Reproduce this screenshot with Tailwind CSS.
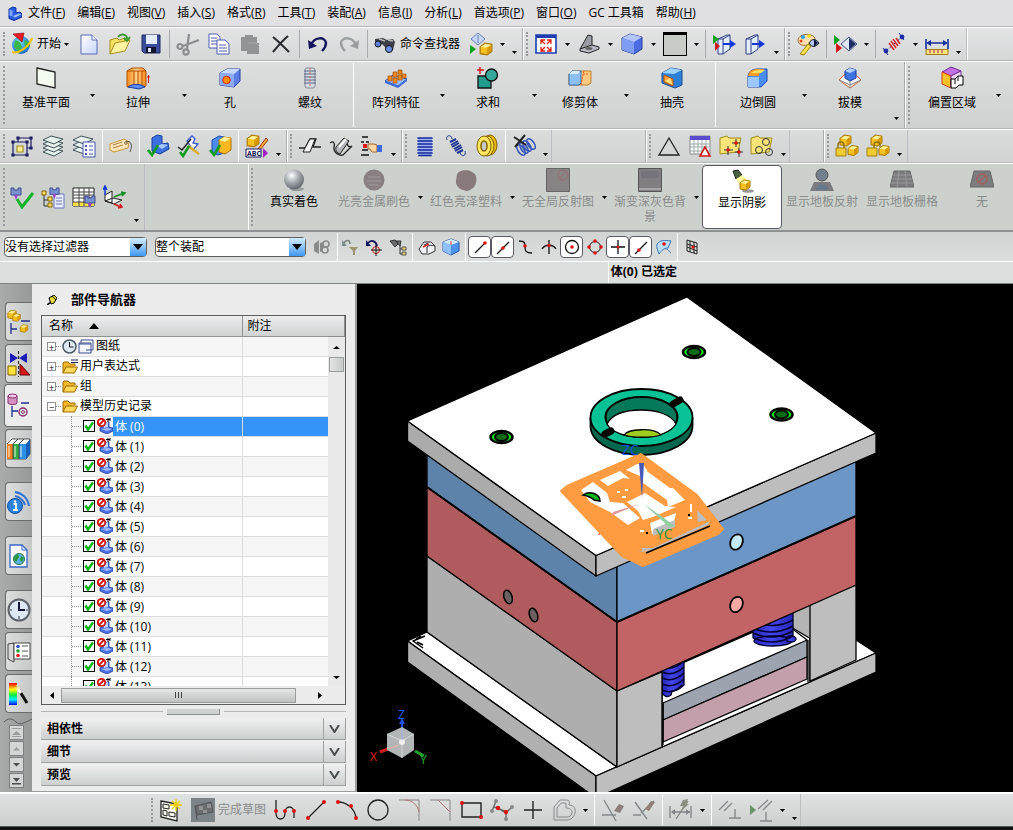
<!DOCTYPE html>
<html lang="zh-CN">
<head>
<meta charset="utf-8">
<meta name="viewport" content="width=device-width, initial-scale=1">
<title>NX 模具装配</title>
<script src="https://cdn.jsdelivr.net/npm/@tailwindcss/browser@4"></script>
</head>
<body class="flex h-screen flex-col overflow-hidden bg-[#d8dad9] font-['Open_Sans','Noto_Sans_CJK_SC',sans-serif] text-xs text-black">

<!-- Shared symbols -->
<svg class="absolute size-0" aria-hidden="true">
  <defs>
    <linearGradient id="blueG" x1="0" y1="0" x2="1" y2="1"><stop offset="0" stop-color="#b9ccff"/><stop offset="1" stop-color="#3a5fd8"/></linearGradient>
    <linearGradient id="pageG" x1="0" y1="0" x2="1" y2="1"><stop offset="0" stop-color="#fff"/><stop offset="1" stop-color="#c8d4ff"/></linearGradient>
    <linearGradient id="orangeG" x1="0" y1="0" x2="1" y2="0"><stop offset="0" stop-color="#ff8a1c"/><stop offset=".5" stop-color="#ffd08a"/><stop offset="1" stop-color="#ff8a1c"/></linearGradient>
    <linearGradient id="rainG" x1="0" y1="0" x2="0" y2="1"><stop offset="0" stop-color="#f00"/><stop offset=".3" stop-color="#ff0"/><stop offset=".55" stop-color="#0e4"/><stop offset=".75" stop-color="#0ef"/><stop offset="1" stop-color="#00f"/></linearGradient>
    <linearGradient id="springG" x1="0" y1="0" x2="1" y2="0"><stop offset="0" stop-color="#2424b4"/><stop offset=".45" stop-color="#4446f0"/><stop offset="1" stop-color="#2828b4"/></linearGradient>
    <radialGradient id="ballG" cx=".38" cy=".3" r=".75"><stop offset="0" stop-color="#fff"/><stop offset=".45" stop-color="#aab0b4"/><stop offset="1" stop-color="#5a6064"/></radialGradient>
    <radialGradient id="globeG" cx=".4" cy=".35" r=".7"><stop offset="0" stop-color="#7fe0ff"/><stop offset="1" stop-color="#1060c8"/></radialGradient>
  </defs>
  <symbol id="dn" viewBox="0 0 5 3"><path d="M0 0h5L2.500 3z"/></symbol>
  <symbol id="cube" viewBox="0 0 24 24"><path d="M2 6l8-4 12 3v12l-8 5-12-4z" fill="#4a6ce0" stroke="#2c3c9c"/><path d="M2 6l8-4 12 3-8 5z" fill="#b4c6ff"/><path d="M2 6l12 4v12L2 18z" fill="#7f9df5"/></symbol>
  <symbol id="goldbox" viewBox="0 0 12 12"><path d="M1 4l4-3 6 1v6l-4 3-6-1z" fill="#f5c020" stroke="#a87800"/><path d="M1.500 4l4-2.500 5 1L7 5z" fill="#fff09a"/><path d="M7 5l3.500-2.500V8L7 10.500z" fill="#d89800"/></symbol>
  <symbol id="folder" viewBox="0 0 16 14"><path d="M1 13V3l1-1h4l2 2h5v2" fill="#f2b62a" stroke="#9a6a00"/><path d="M1 13l3-6h11.500l-3 6z" fill="#ffd75a" stroke="#9a6a00"/></symbol>
  <symbol id="check" viewBox="0 0 12 12"><path d="M2.500 5.500l2.500 4L10 2.500" fill="none" stroke="#00b414" stroke-width="2.400"/></symbol>
  <symbol id="body" viewBox="0 0 16 16"><path d="M3 10l4-3V5l5-1v5l4 1v3l-6 3-7-3z" fill="#4a72e0" stroke="#1e3c9c" stroke-width=".8"/><path d="M7 5l4-1v5l-4 1z" fill="#c4d6ff"/><path d="M4 11l6 2 5-2-4-1z" fill="#a4bcff"/><path d="M9 1.500h4M11 0v4M13 0v3" stroke="#000"/><circle cx="4.500" cy="4.500" r="3.700" fill="#fff" stroke="#d01414" stroke-width="1.800"/><path d="M2 7l5-5" stroke="#d01414" stroke-width="1.800"/></symbol>
  <symbol id="puzzle" viewBox="0 0 12 14"><path d="M1 2h3v2h4V2h3v7H1z" fill="#7a92d0" stroke="#3a4c90"/><path d="M4 9h4l-2 5z" fill="#a040d0"/></symbol>
</svg>

<!-- Menu bar -->
<nav class="flex h-[27px] shrink-0 items-center gap-3 border-b border-[#b4b4b6] bg-[#e1e1e4] pl-[7px] whitespace-nowrap">
  <svg class="-mr-[6px] size-[15px]" viewBox="0 0 15 15"><path d="M2 3l4-2 3 1v5l4-1 2 2v3l-8 3.500-5-2z" fill="#2c5fe0" stroke="#0a2c9c"/><path d="M2.500 3.500l3 1v6l-3-1z" fill="#7fa4ff"/><path d="M6 10l6-2.500 2 1-6 3z" fill="#a4c4ff"/></svg>
  <button>文件(<u>F</u>)</button><button>编辑(<u>E</u>)</button><button>视图(<u>V</u>)</button><button>插入(<u>S</u>)</button><button>格式(<u>R</u>)</button><button>工具(<u>T</u>)</button><button>装配(<u>A</u>)</button><button>信息(<u>I</u>)</button><button>分析(<u>L</u>)</button><button>首选项(<u>P</u>)</button><button>窗口(<u>O</u>)</button><button>GC 工具箱</button><button>帮助(<u>H</u>)</button>
</nav>

<!-- Standard toolbar -->
<div class="flex h-[34px] shrink-0 overflow-hidden border-t border-b border-t-white border-b-[#aeb0b0] bg-linear-to-b from-[#e3e3e4] to-[#d6d8d8] *:shrink-0">
  <i class="my-1 mr-[3px] ml-[3px] w-[2px] border-l-2 border-dotted border-[#98999b]"></i>
  <button class="flex w-[65px] items-center gap-[3px] pl-[2px]"><svg class="size-6" viewBox="0 0 24 24"><circle cx="11" cy="13" r="9" fill="url(#globeG)"/><path d="M5 8l5 2 2 5-3 5-5-5zM14 8l5 2v6l-4-2z" fill="#38b848"/><path d="M2 20C9 22 19 15 22 6" fill="none" stroke="#f5c400" stroke-width="2.200"/><path d="M3 2l11-1-2 9z" fill="#e81c24" stroke="#8c0008" stroke-width=".6"/></svg>开始<svg class="h-[3px] w-[5px]"><use href="#dn"/></svg></button>
  <button aria-label="新建" class="grid w-[31px] place-items-center"><svg class="size-6" viewBox="0 0 24 24"><path d="M4 3h11l5 5v14H4z" fill="url(#pageG)" stroke="#5a68b8"/><path d="M15 3v5h5" fill="#fff" stroke="#5a68b8"/></svg></button>
  <button aria-label="打开" class="grid w-[31px] place-items-center"><svg class="size-6" viewBox="0 0 24 24"><path d="M2 22V8l7-2 2 2 6-2v4" fill="#f5e060" stroke="#a89020"/><path d="M2 22l5-11 15-3-5 11z" fill="#fff2a0" stroke="#a89020"/><path d="M10 5c3-4 9-3 9 2m-3-1l3 3 3-4" fill="none" stroke="#3a9c2c" stroke-width="2"/></svg></button>
  <button aria-label="保存" class="grid w-[31px] place-items-center"><svg class="size-6" viewBox="0 0 24 24"><path d="M3 3h18v18H5l-2-2z" fill="#3c4c9c" stroke="#1c2860"/><path d="M7 3h11v9H7z" fill="#e4ecff"/><path d="M7 15h10v6H7z" fill="#10142c"/><path d="M9 16h3v4H9z" fill="#dfe4f4"/></svg></button>
  <i class="my-[2px] ml-[3px] w-[3px] border-l border-[#a9abac]"></i>
  <button aria-label="剪切" class="grid w-[31px] place-items-center"><svg class="size-6" viewBox="0 0 24 24" fill="none" stroke="#8c8e90" stroke-width="2.200"><path d="M13 2l-2 15M23 8L7 14"/><circle cx="4" cy="14.500" r="2.500"/><circle cx="10" cy="20" r="2.600"/></svg></button>
  <button aria-label="复制" class="grid w-[31px] place-items-center"><svg class="size-6" viewBox="0 0 24 24" fill="#fff" stroke="#4a5ab0"><path d="M2 2h8l3 3v11H2z"/><path d="M4 6h6M4 9h7M4 12h7"/><path d="M10 8h8l4 4v10H10z"/><path d="M12 13h7M12 16h8M12 19h8"/></svg></button>
  <button aria-label="粘贴" class="grid w-[31px] place-items-center"><svg class="size-6" viewBox="0 0 24 24" fill="#919395"><path d="M3 5h4V3h8v2h4v6h2v11H9v-3H3z"/><path d="M10 11h8l3 3" fill="none" stroke="#a9abac"/></svg></button>
  <button aria-label="删除" class="grid w-[31px] place-items-center"><svg class="size-6" viewBox="0 0 24 24"><path d="M4 5c5 4 10 9 16 15M19 4C13 9 9 14 4 20" fill="none" stroke="#2c2c30" stroke-width="2.200"/></svg></button>
  <i class="my-[2px] ml-[3px] w-[3px] border-l border-[#a9abac]"></i>
  <button aria-label="撤消" class="grid w-[31px] place-items-center"><svg class="size-6" viewBox="0 0 24 24"><path d="M5 13C8 5 19 4 20 11c0 4-2 6-4 8" fill="none" stroke="#14145c" stroke-width="2.400"/><path d="M2 8l1 9 8-3z" fill="#14145c"/></svg></button>
  <button aria-label="重做" class="grid w-[31px] place-items-center"><svg class="size-6" viewBox="0 0 24 24"><path d="M19 13C16 5 5 4 4 11c0 4 2 6 4 8" fill="none" stroke="#9a9c9e" stroke-width="2.400"/><path d="M22 8l-1 9-8-3z" fill="#9a9c9e"/></svg></button>
  <i class="my-[2px] ml-[3px] w-[3px] border-l border-[#a9abac]"></i>
  <button class="flex w-[95px] items-center gap-1 pl-1 whitespace-nowrap"><svg class="h-6 w-[22px]" viewBox="0 0 22 24"><path d="M1 7l8-1 4 2 6-1 2 3-2 8-5 3-3-6-3-3-4 3-3-2z" fill="#3c3f44"/><circle cx="4" cy="12" r="3" fill="#5a80d8" stroke="#111"/><circle cx="15" cy="17" r="3.500" fill="#6a90e8" stroke="#111"/><path d="M5 7l6 2M14 8l5 1" stroke="#bbb" stroke-width="1.500"/></svg>命令查找器</button>
  <button aria-label="运行" class="grid w-[31px] place-items-center"><svg class="size-6" viewBox="0 0 24 24"><path d="M2 7l7-6 7 6-7 6z" fill="#c8d8f8" stroke="#6a80b8"/><path d="M9 3v8" stroke="#6a80b8"/><path d="M1 13l6 4-6 5z" fill="#10a020"/><svg x="10" y="10" width="14" height="14"><use href="#goldbox"/></svg></svg></button>
  <button aria-label="更多" class="grid w-3 place-items-center"><svg class="h-[3px] w-[5px]"><use href="#dn"/></svg></button>
  <button aria-label="选项" class="grid w-3 place-items-center pt-4"><svg class="h-[3px] w-[5px]"><use href="#dn"/></svg></button>
  <i class="ml-[2px] w-[2px] border-l border-[#a9abac] bg-white"></i><i class="my-1 mx-[2px] w-[2px] border-l-2 border-dotted border-[#98999b]"></i>
  <button aria-label="适合窗口" class="grid w-[31px] place-items-center"><svg class="size-6" viewBox="0 0 24 24"><path d="M2 3h20v18H2z" fill="#fff" stroke="#1c3cb0" stroke-width="1.600"/><path d="M2 3h20v3H2z" fill="#1c3cb0"/><path d="M7 12V8h4M7 8l4 4M17 12V8h-4M17 8l-4 4M7 15v4h4M7 19l4-4M17 15v4h-4M17 19l-4-4" fill="none" stroke="#e02010" stroke-width="1.300"/></svg></button>
  <button aria-label="更多" class="grid w-3 place-items-center"><svg class="h-[3px] w-[5px]"><use href="#dn"/></svg></button>
  <button aria-label="定向视图" class="grid w-[31px] place-items-center"><svg class="size-6" viewBox="0 0 24 24"><path d="M3 17L11 3l4 1v11l-8 3z" fill="#9a9ea4" stroke="#222"/><path d="M3 17l12-4 7 2v2l-10 4-9-2z" fill="#b9bcc2" stroke="#222"/><ellipse cx="12" cy="16.500" rx="3.500" ry="1.500" fill="#666"/></svg></button>
  <button aria-label="更多" class="grid w-3 place-items-center"><svg class="h-[3px] w-[5px]"><use href="#dn"/></svg></button>
  <button aria-label="着色" class="grid w-[31px] place-items-center"><svg class="size-6"><use href="#cube"/></svg></button>
  <button aria-label="更多" class="grid w-3 place-items-center"><svg class="h-[3px] w-[5px]"><use href="#dn"/></svg></button>
  <button aria-label="背景" class="grid w-[31px] place-items-center"><span class="size-6 border border-t-[3px] border-black bg-[#c9cbc9]"></span></button>
  <button aria-label="更多" class="grid w-3 place-items-center"><svg class="h-[3px] w-[5px]"><use href="#dn"/></svg></button>
  <i class="my-[2px] ml-[3px] w-[3px] border-l border-[#a9abac]"></i>
  <button aria-label="剪切截面" class="grid w-[31px] place-items-center"><svg class="size-6" viewBox="0 0 24 24"><path d="M6 7l9-4h3v14l-7 5H6z" fill="#e4ecff" stroke="#2c3c80"/><path d="M11 7v15M6 7h5l7-4" fill="none" stroke="#2c3c80"/><path d="M1 3l6 4-6 5z" fill="#10a020"/><path d="M3 10l5 4-5 5z" fill="#d01818"/><path d="M11 12h8" stroke="#1438d8" stroke-width="2"/><path d="M18 8l6 4-6 4z" fill="#1438d8"/></svg></button>
  <button aria-label="编辑截面" class="grid w-[31px] place-items-center"><svg class="size-6" viewBox="0 0 24 24"><path d="M3 7l9-4h3v14l-7 5H3z" fill="#e4ecff" stroke="#2c3c80"/><path d="M8 7v15M3 7h5l7-4" fill="none" stroke="#2c3c80"/><path d="M9 12h8" stroke="#1438d8" stroke-width="2"/><path d="M16 8l6 4-6 4z" fill="#1438d8"/></svg></button>
  <button aria-label="选项" class="grid w-3 place-items-center pt-4"><svg class="h-[3px] w-[5px]"><use href="#dn"/></svg></button>
  <i class="ml-[2px] w-[2px] border-l border-[#a9abac] bg-white"></i><i class="my-1 mx-[2px] w-[2px] border-l-2 border-dotted border-[#98999b]"></i>
  <button aria-label="编辑对象显示" class="grid w-[31px] place-items-center"><svg class="size-6" viewBox="0 0 24 24"><path d="M2 8c0-6 13-8 17-2 1 5-5 5-8 7-4 1-9 0-9-5z" fill="#ffe0b0" stroke="#a07030"/><circle cx="7" cy="5" r="2" fill="#2c9cf0"/><circle cx="13" cy="4" r="1.800" fill="#ffe000"/><circle cx="5" cy="9" r="1.500" fill="#f04020"/><path d="M12 12l-8 10 4 1 7-9z" fill="#ffe14a" stroke="#a08000"/><path d="M13 11c3-5 7-4 10 0-3 4-7 5-10 0z" fill="#b4c8f8" stroke="#111"/><path d="M18 7v8l4-4z" fill="#101840"/></svg></button>
  <i class="my-[2px] ml-[3px] w-[3px] border-l border-[#a9abac]"></i>
  <button aria-label="显示隐藏" class="grid w-[31px] place-items-center"><svg class="size-6" viewBox="0 0 24 24"><path d="M1 3l6 5-6 5z" fill="#10a020"/><path d="M3 11l6 5-6 5z" fill="#d01818"/><path d="M8 12l8-7 8 7-8 7z" fill="#dfe6f8" stroke="#3c4c80"/><path d="M16 6v12l7-6z" fill="#1c2c60"/></svg></button>
  <button aria-label="更多" class="grid w-3 place-items-center"><svg class="h-[3px] w-[5px]"><use href="#dn"/></svg></button>
  <i class="my-[2px] ml-[3px] w-[3px] border-l border-[#a9abac]"></i>
  <button aria-label="测量曲线" class="grid w-[31px] place-items-center"><svg class="size-6" viewBox="0 0 24 24"><path d="M4 19L20 5" stroke="#14208c" stroke-dasharray="3 2"/><path d="M7 11l5 7M9 9l5 7M11 7l5 7M14 6l4 6" stroke="#d82020" stroke-width="1.400"/><circle cx="4" cy="19" r="2.400" fill="#1c2ca0"/><circle cx="20" cy="5" r="2.400" fill="#1c2ca0"/><path d="M1 16l5 7M17 1l5 7" stroke="#1c2ca0"/></svg></button>
  <button aria-label="更多" class="grid w-3 place-items-center"><svg class="h-[3px] w-[5px]"><use href="#dn"/></svg></button>
  <button aria-label="测量距离" class="grid w-[31px] place-items-center"><svg class="size-6" viewBox="0 0 24 24"><path d="M1 7v10M23 7v10M4 11h16" stroke="#14309c" stroke-width="1.600"/><path d="M1 11l5-3v6zM23 11l-5-3v6z" fill="#14309c"/><path d="M1 17.500h22v5H1z" fill="#ffe27a" stroke="#a07c10"/><path d="M5 18v3M9 18v3M13 18v3M17 18v3" stroke="#a02080"/></svg></button>
  <button aria-label="选项" class="grid w-3 place-items-center pt-4"><svg class="h-[3px] w-[5px]"><use href="#dn"/></svg></button>
  <i class="ml-[2px] w-[2px] border-l border-[#b9bbbc] bg-white"></i>
</div>

<!-- Feature ribbon -->
<div class="flex h-[68px] shrink-0 overflow-hidden border-t border-b border-t-white border-b-[#b4b6b6] bg-linear-to-b from-[#dddfdf] to-[#ced1cf] *:shrink-0">
  <i class="my-1 mr-px ml-[3px] w-[2px] border-l-2 border-dotted border-[#98999b]"></i>
  <button class="flex w-20 flex-col items-center gap-[5px] pt-1"><svg class="size-6" viewBox="0 0 24 24"><path d="M3 2l18 4v16L3 18z" fill="#f4fbf0" stroke="#222" stroke-width="1.300"/></svg>基准平面</button>
  <button aria-label="更多" class="grid w-3 place-items-center"><svg class="h-[3px] w-[5px]"><use href="#dn"/></svg></button>
  <button class="flex w-20 flex-col items-center gap-[5px] pt-1"><svg class="size-6" viewBox="0 0 24 24"><path d="M1 5l5-3h11l3 3v15l-5 1-6-1-8 1z" fill="url(#orangeG)" stroke="#b05000"/><path d="M1 5h14l5 0M8 5v16M12 5v16M16 5v16" fill="none" stroke="#b05000"/><path d="M2 21c5-4 13-3 17 0l-6 2z" fill="#5a8cf0" stroke="#1c3c9c"/><path d="M22.500 9v8M21 11h3" stroke="#d01818"/></svg>拉伸</button>
  <button aria-label="更多" class="grid w-3 place-items-center"><svg class="h-[3px] w-[5px]"><use href="#dn"/></svg></button>
  <button class="flex w-20 flex-col items-center gap-[5px] pt-1"><svg class="size-6" viewBox="0 0 24 24"><path d="M2 7l7-4h13v12l-6 6-14-2z" fill="#5a80e8" stroke="#2c3c9c"/><path d="M2 7l7-4h13l-6 5z" fill="#c8d8ff"/><path d="M2 7l14 1v13L2 19z" fill="#8cacf8"/><circle cx="8.500" cy="14" r="3.800" fill="#ff8a10" stroke="#d02010"/></svg>孔</button>
  <button class="flex w-20 flex-col items-center gap-[5px] pt-1"><svg class="size-6" viewBox="0 0 24 24"><rect x="7" y="2" width="10" height="20" rx="2" fill="#d4dae2" stroke="#888c98"/><path d="M6 5h12M6 8h12M6 11h12M6 14h12M6 17h12" stroke="#5a6484"/><path d="M12 2v20" stroke="#e06060" stroke-dasharray="2 2"/></svg>螺纹</button>
  <i class="my-px ml-[3px] w-[3px] border-l border-white"></i>
  <button class="flex w-20 flex-col items-center gap-[5px] pt-1"><svg class="size-6" viewBox="0 0 24 24"><path d="M1 15l8-6 14 4-9 7z" fill="#9cc0ff" stroke="#2c50b0"/><path d="M1 15v2l13 5 9-7v-2l-9 7z" fill="#3c6ce0"/><path d="M4 10h4v5H4zM9 6h4v5H9zM14 4h4v4h-4zM9 12h4v5H9zM14 9h4v5h-4zM18 8h4v4h-4z" fill="#f08a18" stroke="#a04c00" stroke-width=".7"/></svg>阵列特征</button>
  <button aria-label="更多" class="grid w-3 place-items-center"><svg class="h-[3px] w-[5px]"><use href="#dn"/></svg></button>
  <button class="flex w-20 flex-col items-center gap-[5px] pt-1"><svg class="size-6" viewBox="0 0 24 24"><path d="M2 10h13v12H2z" fill="#209c8c" stroke="#111" stroke-width="1.300"/><circle cx="15.500" cy="9" r="6" fill="#38a898" stroke="#111" stroke-width="1.300"/><path d="M4 1v7M1 4h7" stroke="#d01818" stroke-width="1.400"/></svg>求和</button>
  <button aria-label="更多" class="grid w-3 place-items-center"><svg class="h-[3px] w-[5px]"><use href="#dn"/></svg></button>
  <button class="flex w-20 flex-col items-center gap-[5px] pt-1"><svg class="size-6" viewBox="0 0 24 24"><path d="M1 8l3-3h19v12l-3 2H1z" fill="#ffc880" stroke="#c08030"/><path d="M1 8l3-3h9v12l-2 2H1z" fill="#8cc0f0" stroke="#3870b0"/><path d="M1 8l3-3h8l-2 3z" fill="#d8ecff"/><path d="M15 8h6M13 19l3-15" stroke="#f06020" stroke-dasharray="2 1"/></svg>修剪体</button>
  <button aria-label="更多" class="grid w-3 place-items-center"><svg class="h-[3px] w-[5px]"><use href="#dn"/></svg></button>
  <button class="flex w-20 flex-col items-center gap-[5px] pt-1"><svg class="size-6" viewBox="0 0 24 24"><path d="M2 7l9-5 11 2v15l-7 3-13-5z" fill="#2c80d8" stroke="#184c90"/><path d="M2 7l9-5 11 2-8 4z" fill="#a0d4ff"/><path d="M4 9l9 4v7l-9-4z" fill="#ffa030" stroke="#b05000"/><path d="M5 15l5-3 3 7z" fill="#ffe080"/></svg>抽壳</button>
  <i class="my-px ml-[3px] w-[3px] border-l border-white"></i>
  <button class="flex w-20 flex-col items-center gap-[5px] pt-1"><svg class="size-6" viewBox="0 0 24 24"><path d="M2 10c1-6 6-7 10-7h9v12l-6 6H2z" fill="#4c8cf0" stroke="#1c4cb0"/><path d="M2 10c1-6 6-7 10-7h9c-5 0-8 3-8 7z" fill="#ff9c28"/><path d="M5 7c2-2 5-3 8-3h6l-4 3z" fill="#ffe060"/><path d="M2 11h11v10H2z" fill="#9cc8ff"/></svg>边倒圆</button>
  <button aria-label="更多" class="grid w-3 place-items-center"><svg class="h-[3px] w-[5px]"><use href="#dn"/></svg></button>
  <button class="flex w-20 flex-col items-center gap-[5px] pt-1"><svg class="size-6" viewBox="0 0 24 24"><path d="M1 14L7 8h10l6 6-11 8z" fill="#eef2f4" stroke="#d06030"/><path d="M7 5l5-3 6 2v8l-6 3-5-3z" fill="#3c74e0" stroke="#1c3c9c"/><path d="M7 5l5-3 6 2-6 3z" fill="#b4d0ff"/><path d="M1 14l11 5 11-5M12 15v7" fill="none" stroke="#888"/></svg>拔模</button>
  <button aria-label="选项" class="grid w-3 items-end justify-center pb-2"><svg class="h-[3px] w-[5px]"><use href="#dn"/></svg></button>
  <i class="ml-[2px] w-[2px] border-l border-[#a9abac] bg-white"></i><i class="my-1 mx-[2px] w-[2px] border-l-2 border-dotted border-[#98999b]"></i>
  <button class="flex w-20 flex-col items-center gap-[5px] pt-1"><svg class="size-6" viewBox="0 0 24 24"><path d="M2 6l9-5 10 4-10 5z" fill="#c070e0" stroke="#702890"/><path d="M2 6l9 4v12l-9-4z" fill="#ffc02c" stroke="#d04010"/><path d="M11 10l10-5v8l-10 9z" fill="#f0d8f8" stroke="#702890"/><path d="M11 13h4l3-3h5v9h-4l-3 3h-5z" fill="#fff" stroke="#000"/><path d="M15 13v5M18 10v5" stroke="#000"/></svg>偏置区域</button>
  <button aria-label="更多" class="grid w-3 place-items-center"><svg class="h-[3px] w-[5px]"><use href="#dn"/></svg></button>
</div>

<!-- Utility toolbar -->
<div class="flex h-[34px] shrink-0 overflow-hidden border-t border-b border-t-white border-b-[#b9bbbb] bg-linear-to-b from-[#dbdddd] to-[#d0d3d1] *:shrink-0">
  <i class="my-1 mr-px ml-[3px] w-[2px] border-l-2 border-dotted border-[#98999b]"></i>
  <button aria-label="图层" class="grid w-[31px] place-items-center"><svg class="size-6" viewBox="0 0 24 24" fill="none" stroke="#1c1c60" stroke-width="1.200"><path d="M8 4h13v10h-4M8 4v4M3 8h14v13H3z"/><path d="M7 12h6v6H7z" fill="#ffee90" stroke="#a09020"/><path d="M7 3h2v2H7zM20 3h2v2h-2zM20 13h2v2h-2zM2 7h2v2H2zM16 7h2v2h-2zM2 20h2v2H2zM16 20h2v2h-2z" fill="#1c1c60"/></svg></button>
  <button aria-label="图层设置" class="grid w-[31px] place-items-center"><svg class="size-6" viewBox="0 0 24 24" fill="#e8f2ec" stroke="#3c5058"><path d="M2 18l8-4 12 3-9 5z"/><path d="M2 14l8-4 12 3-9 5z"/><path d="M2 10l8-4 12 3-9 5z"/><path d="M2 6l8-4 12 3-9 5z"/></svg></button>
  <button aria-label="视图可见图层" class="grid w-[31px] place-items-center"><svg class="size-6" viewBox="0 0 24 24" fill="#e8f2ec" stroke="#3c5058"><path d="M1 16l8-4 12 3-9 5z"/><path d="M1 11l8-4 12 3-9 5z"/><path d="M1 6l8-4 12 3-9 5z"/><path d="M11 8h12v15H11z" fill="#f4f6ff" stroke="#4a5aa8"/><path d="M13 11h2v2h-2zM13 15h2v2h-2zM13 19h2v2h-2z" fill="#4a5aa8" stroke="none"/><path d="M17 12h4M17 16h4M17 20h4" stroke="#4a5aa8"/></svg></button>
  <i class="ml-[3px] w-[3px] border-l border-white"></i>
  <button aria-label="属性" class="grid w-[31px] place-items-center"><svg class="size-6" viewBox="0 0 24 24"><path d="M1 10l14-5 5 3-1 6-14 4-4-2z" fill="#ffe6b8" stroke="#c8963c"/><path d="M4 11l9-3M4 14l10-3" stroke="#b08040"/><circle cx="17" cy="9" r="1.300" fill="#fff" stroke="#806020"/><path d="M17 8c5-2 7 3 4 10" fill="none" stroke="#555"/></svg></button>
  <i class="ml-[3px] w-[3px] border-l border-white"></i>
  <button aria-label="检查几何体" class="grid w-[31px] place-items-center"><svg class="size-6" viewBox="0 0 24 24"><path d="M6 12V4l5-3 5 1v8l6-1 1 6-9 5-8-3z" fill="#3c70e0" stroke="#143c9c"/><path d="M11 12l5-2 6 1-6 4z" fill="#a8c8ff"/><path d="M2 16l4 5 6-10" fill="none" stroke="#109c20" stroke-width="2.600"/></svg></button>
  <button aria-label="检查草图" class="grid w-[31px] place-items-center"><svg class="size-6" viewBox="0 0 24 24"><path d="M10 7L15 2l3 3-2 4 5 1-5 6z" fill="#fff" stroke="#3858d0" stroke-width="1.300"/><path d="M1 13l4 3 9-11" stroke="#222" fill="none" stroke-width="1.500"/><path d="M11 12l11 8" stroke="#d8b030" stroke-width="2.500"/><path d="M3 18l3 4 6-10" fill="none" stroke="#109c20" stroke-width="2.600"/></svg></button>
  <button aria-label="检查装配" class="grid w-[31px] place-items-center"><svg class="size-6" viewBox="0 0 24 24"><path d="M4 6l7-4 5 1v16l-6 2-6-2z" fill="#4c8cf0" stroke="#1c4cb0"/><path d="M11 6l5-3 7 1v12l-6 4-6-2z" fill="#ffb820" stroke="#b07000"/><path d="M11 6l5-3 7 1-6 4z" fill="#fff09a"/><path d="M2 16l4 5 6-10" fill="none" stroke="#109c20" stroke-width="2.600"/></svg></button>
  <i class="ml-[3px] w-[3px] border-l border-white"></i>
  <button aria-label="命名" class="grid w-[31px] place-items-center"><svg class="size-6" viewBox="0 0 24 24"><svg x="1" y="0" width="14" height="14"><use href="#goldbox"/></svg><path d="M13 15l8-11 2 2-8 10z" fill="#ffb040" stroke="#a03010"/><path d="M1 15h15v8H1z" fill="#fff" stroke="#14145c"/><text x="2" y="22" font-size="7" font-weight="700" fill="#14145c">ABC</text><path d="M18 14l5 5-5 5z" fill="#a020c0"/></svg></button>
  <button aria-label="选项" class="grid w-3 place-items-center pt-4"><svg class="h-[3px] w-[5px]"><use href="#dn"/></svg></button>
  <i class="ml-[2px] w-[2px] border-l border-[#a9abac] bg-white"></i><i class="my-1 mx-[2px] w-[2px] border-l-2 border-dotted border-[#98999b]"></i>
  <button aria-label="通过曲线组" class="grid w-[31px] place-items-center"><svg class="size-6" viewBox="0 0 24 24"><path d="M1 14h6l5-9h6l-3 8h8" fill="none" stroke="#222" stroke-width="1.300"/><path d="M12 5h5l-5 13H5l2-4z" fill="#f4f4f4" stroke="#222"/></svg></button>
  <button aria-label="扫掠" class="grid w-[31px] place-items-center"><svg class="size-6" viewBox="0 0 24 24"><path d="M1 9c4-3 5 1 4 4-1 6 6 9 9 8l9-9c-4 2-6-2-4-5" fill="none" stroke="#222" stroke-width="1.300"/><path d="M7 13l8-9 5 3-9 13c-3-1-5-4-4-7z" fill="#b4b8bc" stroke="#222"/><path d="M10 13l7-8" stroke="#fff" stroke-width="2"/></svg></button>
  <button aria-label="选择" class="grid w-[31px] place-items-center"><svg class="size-6" viewBox="0 0 24 24"><path d="M2 3h6M1 8h3M6 8h3M2 16h6M1 21h8" stroke="#111" stroke-width="1.600"/><path d="M3 10h4v4H3z" fill="#e01818"/><path d="M8 10h6l3 1v7h-5l-2-3H8z" fill="#ffd8a8" stroke="#a06830"/><path d="M17 11h5v7h-5z" fill="#3c6ce0"/></svg></button>
  <button aria-label="选项" class="grid w-3 place-items-center pt-4"><svg class="h-[3px] w-[5px]"><use href="#dn"/></svg></button>
  <i class="ml-[2px] w-[2px] border-l border-[#a9abac] bg-white"></i><i class="my-1 mx-[2px] w-[2px] border-l-2 border-dotted border-[#98999b]"></i>
  <button aria-label="圆柱压缩弹簧" class="grid w-[31px] place-items-center"><svg class="size-6" viewBox="0 0 24 24"><path d="M5 4h14v17H5z" fill="#a0b4f0"/><path d="M5 4h14M5 7h14M5 10h14M5 13h14M5 16h14M5 19h14M6 21.500h12" stroke="#14289c" stroke-width="1.700" stroke-linecap="round"/></svg></button>
  <button aria-label="圆柱拉伸弹簧" class="grid w-[31px] place-items-center"><svg class="size-6" viewBox="0 0 24 24" fill="none" stroke="#1c3494"><path d="M3 6C1 1 8 0 8 5M16 18c0 5 7 5 5-1"/><path d="M6 8l6-3M7 11l7-4M8 13l7-4M10 15l7-4M11 17l7-4M13 19l6-3" stroke-width="2"/></svg></button>
  <button aria-label="碟形弹簧" class="grid w-[31px] place-items-center"><svg class="size-6" viewBox="0 0 24 24"><ellipse cx="15" cy="11" rx="7" ry="10" fill="#e8b810" stroke="#806000"/><ellipse cx="12" cy="12" rx="7" ry="10" fill="#f8d840" stroke="#806000"/><ellipse cx="9" cy="12" rx="7" ry="10" fill="#ffe860" stroke="#806000"/><ellipse cx="9" cy="12" rx="3" ry="5" fill="#c8cac8" stroke="#806000" stroke-width="1.500"/></svg></button>
  <i class="ml-[3px] w-[3px] border-l border-white"></i>
  <button aria-label="删除弹簧" class="grid w-[31px] place-items-center"><svg class="size-6" viewBox="0 0 24 24" fill="none" stroke="#3454b8" stroke-width="1.600"><ellipse cx="9" cy="16" rx="3" ry="6" transform="rotate(-35 9 16)"/><ellipse cx="12" cy="14" rx="3" ry="6" transform="rotate(-35 12 14)"/><ellipse cx="15" cy="12" rx="3" ry="6" transform="rotate(-35 15 12)"/><ellipse cx="19" cy="10" rx="3" ry="6" transform="rotate(-35 19 10)"/><path d="M2 3l12 8M13 1L3 13" stroke="#222" stroke-width="2"/></svg></button>
  <button aria-label="选项" class="grid w-3 place-items-center pt-4"><svg class="h-[3px] w-[5px]"><use href="#dn"/></svg></button>
  <i class="w-[92px] border-l border-[#c0bcc4]"></i>
  <i class="ml-[2px] w-[2px] border-l border-[#a9abac] bg-white"></i><i class="my-1 mx-[2px] w-[2px] border-l-2 border-dotted border-[#98999b]"></i>
  <button aria-label="三角" class="grid w-[31px] place-items-center"><svg class="size-6" viewBox="0 0 24 24"><path d="M12 4l10 17H2z" fill="none" stroke="#222" stroke-width="1.300"/></svg></button>
  <button aria-label="表格" class="grid w-[31px] place-items-center"><svg class="size-6" viewBox="0 0 24 24"><path d="M2 2h20v18H2z" fill="#fff" stroke="#888"/><path d="M2 2h20v4H2z" fill="#5a4ccc"/><path d="M2 10h20M2 13h20M2 17h20M6 6v14M10 6v14M14 6v14M18 6v14" stroke="#9aa"/><path d="M17 13l5 9H12z" fill="#fff" stroke="#d01818" stroke-width="1.600"/></svg></button>
  <button aria-label="点集" class="grid w-[31px] place-items-center"><svg class="size-6" viewBox="0 0 24 24"><path d="M1 20V4l7-2 2 2h12l-3 14z" fill="#f8e478" stroke="#a08c20"/><path d="M17 5v8M13 9h8M9 12v9M5 16h9M20 14v9M16 18h8" stroke="#333"/><circle cx="17" cy="9" r="1.800" fill="#e01010"/><circle cx="9" cy="16" r="1.800" fill="#e01010"/><circle cx="20" cy="18" r="1.800" fill="#e01010"/></svg></button>
  <button aria-label="圆集" class="grid w-[31px] place-items-center"><svg class="size-6" viewBox="0 0 24 24"><path d="M1 20V4l7-2 2 2h12l-3 14z" fill="#f8e478" stroke="#a08c20"/><circle cx="16" cy="8" r="3.500" fill="none" stroke="#333"/><circle cx="9" cy="16" r="3.500" fill="none" stroke="#333"/><circle cx="19" cy="18" r="3.500" fill="none" stroke="#333"/></svg></button>
  <button aria-label="选项" class="grid w-3 place-items-center pt-4"><svg class="h-[3px] w-[5px]"><use href="#dn"/></svg></button>
  <i class="w-[32px] border-l border-[#c0bcc4]"></i>
  <i class="ml-[2px] w-[2px] border-l border-[#a9abac] bg-white"></i><i class="my-1 mx-[2px] w-[2px] border-l-2 border-dotted border-[#98999b]"></i>
  <button aria-label="锁定" class="grid w-[31px] place-items-center"><svg class="size-6" viewBox="0 0 24 24"><svg x="4" y="0" width="13" height="13"><use href="#goldbox"/></svg><svg x="12" y="10" width="12" height="13"><use href="#goldbox"/></svg><path d="M1 14h10v8H1z" fill="#f0cc30" stroke="#a08010"/><path d="M3 14v-3c0-4 6-4 6 0v3" fill="none" stroke="#907010" stroke-width="1.400"/></svg></button>
  <button aria-label="解锁" class="grid w-[31px] place-items-center"><svg class="size-6" viewBox="0 0 24 24"><svg x="4" y="0" width="13" height="13"><use href="#goldbox"/></svg><svg x="12" y="10" width="12" height="13"><use href="#goldbox"/></svg><path d="M1 14h10v8H1z" fill="#f0cc30" stroke="#a08010"/><path d="M8 14v-3c0-4 6-4 6 0v2" fill="none" stroke="#907010" stroke-width="1.400"/></svg></button>
  <button aria-label="选项" class="grid w-3 place-items-center pt-4"><svg class="h-[3px] w-[5px]"><use href="#dn"/></svg></button>
  <i class="ml-[2px] w-px bg-[#c0bcc4]"></i>
</div>

<!-- Appearance ribbon -->
<div class="flex h-[69px] shrink-0 overflow-hidden border-t border-b-2 border-t-white border-b-[#8f9192] bg-[#cdd1ce] text-[#8a8c8c] *:shrink-0">
  <i class="my-1 mr-px ml-[3px] w-[2px] border-l-2 border-dotted border-[#98999b]"></i>
  <button aria-label="确认" class="grid w-[31px] place-items-center"><svg class="size-6" viewBox="0 0 24 24"><svg x="0" y="1" width="12" height="14"><use href="#puzzle"/></svg><path d="M7 14l5 8L23 8" fill="none" stroke="#10b428" stroke-width="3"/></svg></button>
  <button aria-label="结构" class="grid w-[31px] place-items-center"><svg class="size-6" viewBox="0 0 24 24"><path d="M3 10v11h5M3 15h5" fill="none" stroke="#333"/><path d="M1 6h4v4H1zM7 12h4v4H7zM7 18h4v4H7z" fill="#ffe060" stroke="#806000"/><path d="M13 9h10v14H13z" fill="#e8ecff" stroke="#6a78b8"/><path d="M15 13h6M15 16h6M15 19h6" stroke="#6a78b8"/><svg x="8" y="1" width="11" height="13"><use href="#puzzle"/></svg></svg></button>
  <button aria-label="表" class="grid w-[31px] place-items-center"><svg class="size-6" viewBox="0 0 24 24"><path d="M1 3h21v18H1z" fill="#fff" stroke="#222"/><path d="M1 17h21v4H1z" fill="#ffe04a"/><path d="M1 7h21M1 10h21M1 13h21M1 17h21M7 3v18M12 3v18M17 3v18" stroke="#444"/><svg x="12" y="9" width="12" height="14"><use href="#puzzle"/></svg></svg></button>
  <button aria-label="坐标系" class="grid w-[31px] place-items-center"><svg class="size-6" viewBox="0 0 24 24"><path d="M2 10l7-4v12l-7-2zM2 16l8-3 9 2-8 4z" fill="#f4f4f4" stroke="#222"/><path d="M2 10V2M0 5l2-4 2 4" fill="none" stroke="#1438d8" stroke-width="1.500"/><path d="M11 12l10-4M18 7l4 1-3 3" fill="none" stroke="#108c20" stroke-width="1.500"/><path d="M11 19l7 3M15 23l4-1-2-3" fill="none" stroke="#d01818" stroke-width="1.500"/></svg></button>
  <button aria-label="选项" class="grid w-3 items-end justify-center pb-2"><svg class="h-[3px] w-[5px]"><use href="#dn"/></svg></button>
  <i class="ml-[2px] w-[102px] border-l border-[#bcbac0]"></i>
  <i class="ml-[2px] w-px bg-white"></i><i class="my-1 mr-px ml-[2px] w-[2px] border-l-2 border-dotted border-[#98999b]"></i>
  <button class="flex w-20 flex-col items-center gap-[2px] pt-1 text-black"><svg class="size-6" viewBox="0 0 24 24"><ellipse cx="15" cy="21" rx="7" ry="2" fill="#9a9c9c"/><circle cx="12" cy="11.500" r="10" fill="url(#ballG)"/></svg>真实着色</button>
  <button class="flex w-20 flex-col items-center gap-[2px] pt-1"><svg class="size-6" viewBox="0 0 24 24"><circle cx="12" cy="12" r="10.500" fill="#888083"/><path d="M6 9h12M5 13h14M7 17h10" stroke="#a29a9c"/></svg>光亮金属刷色</button>
  <button aria-label="更多" class="grid w-3 place-items-center text-black"><svg class="h-[3px] w-[5px]"><use href="#dn"/></svg></button>
  <button class="flex w-20 flex-col items-center gap-[2px] pt-1"><svg class="size-6" viewBox="0 0 24 24"><path d="M5 4c5-3 14-2 17 4 2 8-3 14-9 15C6 22 1 18 2 12c1-2 0-6 3-8z" fill="#887a7b"/></svg>红色亮泽塑料</button>
  <button aria-label="更多" class="grid w-3 place-items-center text-black"><svg class="h-[3px] w-[5px]"><use href="#dn"/></svg></button>
  <button class="flex w-20 flex-col items-center gap-[2px] pt-1"><svg class="size-6" viewBox="0 0 24 24"><path d="M.500 .500h23v23H.500z" fill="#888486" stroke="#666"/><circle cx="17" cy="7" r="5" fill="none" stroke="#987070"/><path d="M13 11l8-8" stroke="#987070"/></svg>无全局反射图</button>
  <button aria-label="更多" class="grid w-3 place-items-center text-black"><svg class="h-[3px] w-[5px]"><use href="#dn"/></svg></button>
  <button class="flex w-20 flex-col items-center gap-[2px] pt-1 leading-[15px]"><svg class="size-6" viewBox="0 0 24 24"><path d="M.500 .500h23v23H.500z" fill="#807e80" stroke="#555"/><path d="M3 3h18v7H3z" fill="#74747a"/><path d="M1 21h22" stroke="#a8a4a8" stroke-width="2"/></svg><span>渐变深灰色背景</span></button>
  <button aria-label="更多" class="grid w-3 place-items-center text-black"><svg class="h-[3px] w-[5px]"><use href="#dn"/></svg></button>
  <button aria-pressed="true" class="my-px flex w-20 flex-col items-center gap-[2px] rounded-sm border border-[#5c5864] bg-white pt-[3px] text-black"><svg class="size-6" viewBox="0 0 24 24"><path d="M3 2l5-1 4 5-6 4z" fill="#4a6040" stroke="#222"/><path d="M6 10l6-4 9 8-8 7z" fill="#fff6a0"/><ellipse cx="18" cy="22" rx="6" ry="1.800" fill="#999"/><svg x="9" y="10" width="12" height="12"><use href="#goldbox"/></svg></svg>显示阴影</button>
  <button class="flex w-20 flex-col items-center gap-[2px] pt-1"><svg class="size-6" viewBox="0 0 24 24"><path d="M4 14h16l4 9H0z" fill="#7c7c80"/><circle cx="12" cy="7" r="6" fill="#74808c" stroke="#555"/><path d="M6 22c0-7 12-7 12 0z" fill="#64788c"/></svg>显示地板反射</button>
  <button class="flex w-20 flex-col items-center gap-[2px] pt-1"><svg class="size-6" viewBox="0 0 24 24"><path d="M4 3h16l4 16H0z" fill="#7c7c7e" stroke="#666"/><path d="M3 7h18M2 11h20M1 15h22M9 3L7 19M15 3l2 16" stroke="#979799"/></svg>显示地板栅格</button>
  <button class="flex w-20 flex-col items-center gap-[2px] pt-1"><svg class="size-6" viewBox="0 0 24 24"><path d="M4 3h16l4 16H0z" fill="#7c7c7e" stroke="#666"/><circle cx="12" cy="11" r="5" fill="none" stroke="#a06060" stroke-width="1.500"/><path d="M9 14l6-6" stroke="#a06060" stroke-width="1.500"/></svg>无</button>
</div>

<!-- Selection bar -->
<div class="flex h-[30px] shrink-0 items-center overflow-hidden border-b border-white bg-linear-to-b from-[#d2d4d3] to-[#dcdedd] pl-1 *:shrink-0">
  <label class="flex h-5 w-[143px] items-center rounded-sm border border-[#5c5e60] bg-white"><select aria-label="选择过滤器" class="h-full min-w-0 flex-1 appearance-none bg-transparent outline-none"><option>没有选择过滤器</option></select><span class="grid h-full w-4 place-items-center bg-linear-to-b from-[#d4ecff] to-[#3c98f0]"><svg class="h-[6px] w-[10px]"><use href="#dn"/></svg></span></label>
  <label class="ml-2 flex h-5 w-[151px] items-center rounded-sm border border-[#5c5e60] bg-white"><select aria-label="选择范围" class="h-full min-w-0 flex-1 appearance-none bg-transparent outline-none"><option>整个装配</option></select><span class="grid h-full w-4 place-items-center bg-linear-to-b from-[#d4ecff] to-[#3c98f0]"><svg class="h-[6px] w-[10px]"><use href="#dn"/></svg></span></label>
  <button aria-label="组件内" class="ml-1 grid w-6 place-items-center"><svg class="size-[18px]" viewBox="0 0 18 18"><path d="M1 6l5-4v14l-5-3zM7 5l3-1v9l-3 1z" fill="#888a8a"/><circle cx="13" cy="6" r="3" fill="none" stroke="#888a8a" stroke-width="1.600"/><circle cx="12" cy="12" r="3" fill="none" stroke="#888a8a" stroke-width="1.600"/></svg></button>
  <i class="ml-[3px] h-7 w-px bg-white"></i>
  <button aria-label="重置过滤器" class="grid w-6 place-items-center"><svg class="size-[18px]" viewBox="0 0 18 18"><path d="M3 5c2-4 6-3 6 1" fill="none" stroke="#7c8080" stroke-width="1.600"/><path d="M1 2v6h5z" fill="#7c8c8c"/><path d="M8 9h9l-3 4v4h-2v-4z" fill="#9a9470"/></svg></button>
  <button aria-label="捕捉" class="grid w-6 place-items-center"><svg class="size-[18px]" viewBox="0 0 18 18"><path d="M3 5c3-4 8-2 9 3" fill="none" stroke="#14145c" stroke-width="1.800"/><path d="M1 2v6h5z" fill="#14145c"/><circle cx="11" cy="12" r="3.500" fill="none" stroke="#d02020"/><path d="M11 7v11M6 12h11" stroke="#111"/></svg></button>
  <button aria-label="刷新" class="grid w-6 place-items-center"><svg class="size-[18px]" viewBox="0 0 18 18"><path d="M1 3l5-1 3 4-3 3zM7 3h5l-1 5z" fill="#6a6c70" stroke="#333"/><path d="M11 7v9h3M11 11h3" fill="none" stroke="#333"/><path d="M13 9h4v3h-4zM13 14h4v3h-4z" fill="#e8d860" stroke="#555"/></svg></button>
  <i class="mx-[2px] h-7 w-px bg-white"></i>
  <button aria-label="选择面" class="grid w-6 place-items-center"><svg class="size-[18px]" viewBox="0 0 18 18"><path d="M1 11l5-7h7l4 4v5l-6 3H4z" fill="#eef0f4" stroke="#333"/><path d="M9 9c2-2 5-2 8-1M9 9v6M6 7l4-2" fill="none" stroke="#333"/><path d="M5 9l6-3" stroke="#d02020" stroke-width="1.500"/></svg></button>
  <button aria-label="选择体" class="grid w-6 place-items-center"><svg class="size-[18px]" viewBox="0 0 18 18"><path d="M1 4l8-3 8 3v9l-8 4-8-4z" fill="#4c94f0" stroke="#2850a8"/><path d="M1 4l8-3 8 3-8 3z" fill="#d8ecff"/><path d="M1 4l8 3v10l-8-4z" fill="#8cc0ff"/><path d="M9 3v4" stroke="#f04040"/></svg></button>
  <i class="mx-[2px] h-7 w-px bg-white"></i>
  <button aria-label="端点" aria-pressed="true" class="grid h-[22px] w-[23px] place-items-center rounded-sm border border-[#5c5864] bg-white"><svg class="size-4" viewBox="0 0 16 16"><path d="M3 14L13 4" stroke="#111" stroke-width="1.300"/><circle cx="13" cy="4" r="1.800" fill="#e01010"/></svg></button>
  <button aria-label="中点" aria-pressed="true" class="grid h-[22px] w-[23px] place-items-center rounded-sm border border-[#5c5864] bg-white"><svg class="size-4" viewBox="0 0 16 16"><path d="M2 15L14 3" stroke="#111" stroke-width="1.300"/><circle cx="8" cy="9" r="1.800" fill="#e01010"/></svg></button>
  <button aria-label="控制点" class="grid h-[22px] w-[23px] place-items-center"><svg class="size-4" viewBox="0 0 16 16"><path d="M1 2c6 0 6 2 6 6s1 6 7 6" fill="none" stroke="#111" stroke-width="1.300"/><circle cx="7" cy="7" r="1.800" fill="#e01010"/></svg></button>
  <button aria-label="交点" class="grid h-[22px] w-[23px] place-items-center"><svg class="size-4" viewBox="0 0 16 16"><path d="M1 10c3-5 11-5 14 0M8 1v14" fill="none" stroke="#111" stroke-width="1.300"/><circle cx="8" cy="6.500" r="1.800" fill="#e01010"/></svg></button>
  <button aria-label="圆弧中心" aria-pressed="true" class="grid h-[22px] w-[23px] place-items-center rounded-sm border border-[#5c5864] bg-white"><svg class="size-4" viewBox="0 0 16 16"><circle cx="8" cy="8" r="6.500" fill="none" stroke="#111" stroke-width="1.300"/><circle cx="8" cy="8" r="1.800" fill="#e01010"/></svg></button>
  <button aria-label="象限点" class="grid h-[22px] w-[23px] place-items-center"><svg class="size-4" viewBox="0 0 16 16"><circle cx="8" cy="8" r="5.500" fill="none" stroke="#111"/><g fill="#e01010"><circle cx="8" cy="2" r="1.800"/><circle cx="8" cy="14" r="1.800"/><circle cx="2" cy="8" r="1.800"/><circle cx="14" cy="8" r="1.800"/></g></svg></button>
  <button aria-label="现有点" aria-pressed="true" class="grid h-[22px] w-[23px] place-items-center rounded-sm border border-[#5c5864] bg-white"><svg class="size-4" viewBox="0 0 16 16"><path d="M8 1v14M1 8h14" stroke="#111" stroke-width="1.300"/><circle cx="8" cy="8" r="1.500" fill="#e01010"/></svg></button>
  <button aria-label="曲线上的点" aria-pressed="true" class="grid h-[22px] w-[23px] place-items-center rounded-sm border border-[#5c5864] bg-white"><svg class="size-4" viewBox="0 0 16 16"><path d="M2 15L14 3" stroke="#111" stroke-width="1.300"/><circle cx="6" cy="11" r="1.800" fill="#e01010"/></svg></button>
  <button aria-label="面上的点" class="grid h-[22px] w-[23px] place-items-center"><svg class="size-4" viewBox="0 0 16 16"><path d="M1 5c3-4 7-4 14-3l-3 7c-4 0-6 2-9 6-1-4-3-6-2-10z" fill="#b8dcfa" stroke="#3878b8"/><path d="M9 10c3-1 4 3 6 4" fill="none" stroke="#3878b8"/><circle cx="8" cy="5" r="1.800" fill="#e01010"/></svg></button>
  <i class="mx-[2px] h-7 w-px bg-white"></i>
  <button aria-label="栅格点" class="grid w-6 place-items-center"><svg class="size-4" viewBox="0 0 16 16"><path d="M3 1l10 3v11L3 12zM3 5l10 3M3 8l10 4M6 2v11M10 3v11" fill="none" stroke="#222"/><circle cx="9" cy="8" r="1.600" fill="#e01010"/></svg></button>
</div>

<!-- Status line -->
<div class="flex h-[22px] shrink-0 items-center border-b border-[#7f8182] bg-[#dcdddd]">
  <div class="w-3/5"></div>
  <p class="h-full border-l border-white pl-[2px] leading-[20px] font-bold">体(0) 已选定</p>
</div>

<!-- Work area -->
<main class="flex min-h-0 flex-1">
  <!-- Resource bar -->
  <aside class="flex w-8 shrink-0 flex-col items-end bg-linear-to-r from-[#aaacac] to-[#979999] pt-[18px] *:shrink-0">
    <button aria-label="装配导航器" class="grid h-[39px] w-[27px] place-items-center rounded-l-sm border border-r-0 border-[#6a6c6e] bg-linear-to-r from-[#dcdcdc] to-[#c6c8c8]"><svg class="h-[26px] w-6" viewBox="0 0 24 26"><path d="M4 14v11M4 20h6M14 12h9" stroke="#1c2c8c" stroke-width="1.300"/><svg x="0" y="0" width="10" height="11"><use href="#goldbox"/></svg><svg x="5" y="4" width="9" height="9"><use href="#goldbox"/></svg><svg x="12" y="15" width="10" height="9"><use href="#goldbox"/></svg></svg></button>
    <button aria-label="约束导航器" class="mt-[3px] grid h-[39px] w-[27px] place-items-center rounded-l-sm border border-r-0 border-[#6a6c6e] bg-linear-to-r from-[#dcdcdc] to-[#c6c8c8]"><svg class="h-[26px] w-6" viewBox="0 0 24 26"><path d="M3 2l8 5-8 5zM20 2l-8 5 8 5z" fill="#1c1cb8"/><path d="M1 15h8v9H1z" fill="#ffe23c" stroke="#806000"/><path d="M13 13l10 11H13z" fill="#d81818" stroke="#600"/><path d="M11.500 0v26" stroke="#222" stroke-dasharray="3 2"/></svg></button>
    <button aria-label="部件导航器" aria-pressed="true" class="mt-px grid h-[43px] w-7 place-items-center rounded-l-sm border border-r-0 border-[#6a6c6e] bg-[#ececed]"><svg class="h-[26px] w-6" viewBox="0 0 24 26"><path d="M5 13v11M5 18h6M14 10h8" stroke="#1c2c8c" stroke-width="1.300"/><path d="M1 3v7c0 2 9 2 9 0V3" fill="#d890c0" stroke="#802868"/><ellipse cx="5.500" cy="3" rx="4.500" ry="2" fill="#f4c8e4" stroke="#802868"/><circle cx="16" cy="19" r="4" fill="none" stroke="#802868" stroke-width="1.400"/><circle cx="16" cy="19" r="1.500" fill="none" stroke="#802868"/></svg></button>
    <button aria-label="重用库" class="mt-[2px] grid h-[39px] w-[27px] place-items-center rounded-l-sm border border-r-0 border-[#6a6c6e] bg-linear-to-r from-[#dcdcdc] to-[#c6c8c8]"><svg class="size-6" viewBox="0 0 24 24"><path d="M0 7l5-5h18v15l-4 5H0z" fill="#fff" stroke="#555"/><path d="M0 7h6v15H0z" fill="#f08020"/><path d="M6 7h6v15H6z" fill="#30b040"/><path d="M12 7h7v15h-7z" fill="#2c90e8"/><path d="M19 7l4-5v15l-4 5z" fill="#1860b8"/><path d="M6 7l5-5M12 7l5-5M6 7v15M12 7v15" stroke="#444"/><path d="M2 9v11M8 9v11M14 9v11" stroke="#fff" stroke-opacity=".6" stroke-width="1.500"/></svg></button>
    <button aria-label="HD3D 工具" class="mt-[14px] grid h-[39px] w-[27px] place-items-center rounded-l-sm border border-r-0 border-[#6a6c6e] bg-linear-to-r from-[#dcdcdc] to-[#c6c8c8]"><svg class="size-6" viewBox="0 0 24 24"><path d="M8 2c7 1 13 6 14 14M8 6c5 1 9 5 10 9" fill="none" stroke="#3070d0" stroke-width="2"/><circle cx="8" cy="16" r="7.500" fill="#2c84e0" stroke="#144c98"/><path d="M6.500 14H9v6M6 20h5" fill="none" stroke="#fff" stroke-width="1.800"/><circle cx="8" cy="11.500" r="1.300" fill="#fff"/></svg></button>
    <button aria-label="Web 浏览器" class="mt-[15px] grid h-[39px] w-[27px] place-items-center rounded-l-sm border border-r-0 border-[#6a6c6e] bg-linear-to-r from-[#dcdcdc] to-[#c6c8c8]"><svg class="size-6" viewBox="0 0 24 24"><path d="M3 1h12l5 5v17H3z" fill="#f8faff" stroke="#3868c8" stroke-width="1.300"/><path d="M15 1v5h5" fill="none" stroke="#3868c8"/><circle cx="12" cy="15" r="5.500" fill="#60b0f0" stroke="#207838"/><path d="M8 12l3-2 1 3-3 5-2-2zM14 12l3 2-2 4-2-2z" fill="#289838"/></svg></button>
    <button aria-label="历史记录" class="mt-[15px] grid h-[39px] w-[27px] place-items-center rounded-l-sm border border-r-0 border-[#6a6c6e] bg-linear-to-r from-[#dcdcdc] to-[#c6c8c8]"><svg class="size-6" viewBox="0 0 24 24"><circle cx="12" cy="12" r="10.500" fill="#dce8f4" stroke="#5c6068" stroke-width="2"/><path d="M12 4v8h6" fill="none" stroke="#14143c" stroke-width="2"/><path d="M12 18v3M3 12h2M19 12h2" stroke="#333"/></svg></button>
    <button aria-label="系统材料" class="mt-[3px] grid h-[39px] w-[27px] place-items-center rounded-l-sm border border-r-0 border-[#6a6c6e] bg-linear-to-r from-[#dcdcdc] to-[#c6c8c8]"><svg class="size-6" viewBox="0 0 24 24"><path d="M1 4l6-1v19l-6-3z" fill="#d8d8d8" stroke="#444"/><path d="M7 3h16v16H7z" fill="#fff" stroke="#444"/><circle cx="11" cy="6.500" r="1.800" fill="#2c50e0"/><circle cx="11" cy="11" r="1.800" fill="#20a030"/><circle cx="11" cy="15.500" r="1.800" fill="#e01818"/><path d="M15 6h6M15 11h6M15 16h6" stroke="#555"/></svg></button>
    <button aria-label="可视化" class="mt-[3px] grid h-[39px] w-[27px] place-items-center rounded-l-sm border border-r-0 border-[#6a6c6e] bg-linear-to-r from-[#dcdcdc] to-[#c6c8c8]"><svg class="size-6" viewBox="0 0 24 24"><path d="M2 1h8v22H2z" fill="url(#rainG)"/><path d="M12 8l8 13" stroke="#111" stroke-width="3"/><path d="M11 7l3 4" stroke="#fff" stroke-width="3"/><path d="M10 3v6M7 6h6" stroke="#ffee80"/></svg></button>
    <svg class="mt-1 h-2 w-7" viewBox="0 0 28 8"><path d="M0 5c4-4 8-4 12 0s10 0 16-3" fill="none" stroke="#5c5e60"/></svg>
    <div class="mr-2 flex flex-col gap-px text-[#4a4c4e]">
      <button aria-label="顶部" class="grid h-[15px] w-[15px] place-items-center border border-[#7c7e80] bg-[#d4d6d6] text-[#9a9c9c]"><svg class="size-[9px]" viewBox="0 0 9 9" fill="currentColor"><path d="M0 0h9v1H0zM0 7l4.500-4L9 7zM0 8h9v1H0z"/></svg></button>
      <button aria-label="上移" class="grid h-[15px] w-[15px] place-items-center border border-[#7c7e80] bg-[#d4d6d6] text-[#9a9c9c]"><svg class="size-[9px]" viewBox="0 0 9 9" fill="currentColor"><path d="M1 6.500L4.500 3 8 6.500z"/></svg></button>
      <button aria-label="下移" class="grid h-[15px] w-[15px] place-items-center border border-[#7c7e80] bg-[#d4d6d6]"><svg class="size-[9px]" viewBox="0 0 9 9" fill="currentColor"><path d="M1 3l3.500 3.500L8 3z"/></svg></button>
      <button aria-label="底部" class="grid h-[15px] w-[15px] place-items-center border border-[#7c7e80] bg-[#d4d6d6]"><svg class="size-[9px]" viewBox="0 0 9 9" fill="currentColor"><path d="M1 2l3.500 4L8 2zM0 7h9v1.500H0z"/></svg></button>
    </div>
  </aside>

  <!-- Part navigator -->
  <section class="flex w-[325px] shrink-0 flex-col border-r-2 border-b border-[#9a9c9e] bg-[#ececed] pr-[9px] pl-[9px]">
    <h2 class="flex h-[31px] shrink-0 items-center gap-[14px] pl-[6px] text-[13px] font-bold"><svg class="size-[10px]" viewBox="0 0 10 10"><path d="M0 10l4-3" stroke="#000" stroke-width="1.500"/><path d="M2 3l5-3 3 3-3 5-3 1z" fill="#e8d840" stroke="#000"/><path d="M5 1l4 4" stroke="#000"/></svg>部件导航器</h2>
    <div class="flex min-h-0 flex-1 flex-col border border-[#5c5e60] bg-[#ececed]">
      <div class="flex min-h-0 flex-1">
        <div class="min-w-0 flex-1 overflow-hidden">
          <table class="w-full table-fixed border-collapse text-[12px]">
            <thead><tr class="h-5 bg-linear-to-b from-[#ededee] to-[#d0d2d2] text-left">
              <th class="w-[200px] border-r border-b border-[#8f9192] p-0 pl-[7px] font-normal"><span class="flex items-center gap-4">名称<svg class="h-[6px] w-[10px]" viewBox="0 0 10 6"><path d="M0 6l5-6 5 6z"/></svg></span></th>
              <th class="border-b border-[#8f9192] p-0 pl-[5px] font-normal">附注</th>
            </tr></thead>
            <tbody id="tree"></tbody>
          </table>
        </div>
        <div class="flex w-[17px] shrink-0 flex-col items-center bg-[#e9e9ea]">
          <div class="h-[21px] w-full border-r border-b border-[#8f9192] bg-linear-to-b from-[#ededee] to-[#d0d2d2]"></div>
          <button aria-label="向上滚动" class="grid h-5 w-full place-items-center"><svg class="h-[3px] w-[7px]" viewBox="0 0 7 3"><path d="M0 3l3.500-3L7 3z"/></svg></button>
          <div class="h-[15px] w-[15px] border border-[#9a9c9e] bg-linear-to-r from-[#e4e4e4] to-[#c8caca]"></div>
          <div class="flex-1"></div>
          <button aria-label="向下滚动" class="grid h-[18px] w-full place-items-center"><svg class="h-[3px] w-[7px]" viewBox="0 0 7 3"><path d="M0 0l3.500 3L7 0z"/></svg></button>
        </div>
      </div>
      <div class="flex h-[18px] shrink-0 items-center pr-[17px]">
        <button aria-label="向左滚动" class="grid w-[19px] place-items-center"><svg class="h-[7px] w-[4px]" viewBox="0 0 4 7"><path d="M4 0v7L0 3.500z"/></svg></button>
        <div class="flex h-[15px] flex-1 items-center justify-center gap-[2px] border border-[#9a9c9e] bg-linear-to-b from-[#e6e6e6] to-[#bfc1c1]"><i class="h-[6px] w-px bg-[#444]"></i><i class="h-[6px] w-px bg-[#444]"></i><i class="h-[6px] w-px bg-[#444]"></i></div>
        <button aria-label="向右滚动" class="ml-4 grid w-4 place-items-center"><svg class="h-[7px] w-[4px]" viewBox="0 0 4 7"><path d="M0 0v7l4-3.500z"/></svg></button>
      </div>
    </div>
    <div class="flex h-[13px] shrink-0 items-center gap-1"><i class="h-px flex-1 bg-[#b4b6b6]"></i><i class="h-[6px] w-[53px] border-r border-b border-[#8f9192] bg-[#cfd1d1]"></i><i class="h-px flex-1 bg-[#b4b6b6]"></i></div>
    <div class="flex shrink-0 flex-col gap-px pb-[5px] font-bold">
      <button class="flex h-[22px] items-center border-r border-b border-[#a0a2a2] bg-linear-to-b from-[#f0f0f1] to-[#cdcfcf] pl-[6px]">相依性<span class="ml-auto grid h-full w-[22px] place-items-center border-l border-[#a0a2a2]"><svg class="h-2 w-[11px]" viewBox="0 0 11 8"><path d="M1 0l4.500 7L10 0" fill="none" stroke="#4a4c4e" stroke-width="2"/></svg></span></button>
      <button class="flex h-[22px] items-center border-r border-b border-[#a0a2a2] bg-linear-to-b from-[#f0f0f1] to-[#cdcfcf] pl-[6px]">细节<span class="ml-auto grid h-full w-[22px] place-items-center border-l border-[#a0a2a2]"><svg class="h-2 w-[11px]" viewBox="0 0 11 8"><path d="M1 0l4.500 7L10 0" fill="none" stroke="#4a4c4e" stroke-width="2"/></svg></span></button>
      <button class="flex h-[22px] items-center border-r border-b border-[#a0a2a2] bg-linear-to-b from-[#f0f0f1] to-[#cdcfcf] pl-[6px]">预览<span class="ml-auto grid h-full w-[22px] place-items-center border-l border-[#a0a2a2]"><svg class="h-2 w-[11px]" viewBox="0 0 11 8"><path d="M1 0l4.500 7L10 0" fill="none" stroke="#4a4c4e" stroke-width="2"/></svg></span></button>
    </div>
  </section>

  <!-- Model view -->
  <section class="min-w-0 flex-1 bg-black">
    <svg class="h-full w-full" viewBox="357 284 656 508" role="img" aria-label="模具装配三维视图">
      <g stroke="#000" stroke-width="1.300" stroke-linejoin="round">
        <!-- Bottom plate -->
        <path d="M407.500 641L427 632 617 767 856 640 876 653 596 776z" fill="#fff"/>
        <path d="M407.500 641L596 776v22L407.500 662z" fill="#b0b0b0"/>
        <path d="M876 653L596 776v22L876 672z" fill="#bebebe"/>
        <path d="M425 636l-12 5 10 7M421 636l-5 3M417 642l6 3" fill="none" stroke-width="1.500"/>
        <!-- Ejector space -->
        <path d="M662 672l148-65v75l-148 65z" fill="#fff"/>
        <path d="M791 610l20-8v37l-20-12z" fill="#b4b4b4"/>
        <path d="M663 703l144-63v17l-144 63z" fill="#9da3af"/>
        <path d="M663 720l144-63v22l-144 63z" fill="#c29fab"/>
        <path d="M790 627l17 13M663 703v42M808 640v42" fill="none"/>
        <g fill="url(#springG)" stroke="#00002c">
          <path d="M753 622v16q20 12 40 0v-30z"/>
          <ellipse cx="773" cy="641" rx="19" ry="5"/><ellipse cx="791" cy="639" rx="5" ry="3"/>
          <path d="M753 628q20 9 40-2M753 633q20 9 40-2M754 638q20 9 39-2M755 622q20 8 38-2" fill="none" stroke-width="1.500"/>
          <path d="M662 665v28q4 6 9 2l1-4q6 0 12-6v-29z"/>
          <path d="M662 672q11 5 22-5M662 678q11 5 22-5M662 684q11 5 22-5M662 690q11 5 20-5M662 667q11 4 22-6" fill="none" stroke-width="1.500"/>
        </g>
        <!-- Side blocks -->
        <path d="M427 556L617 691v76L427 632z" fill="#aeaeae"/>
        <path d="M617 691l45-19v75l-45 20z" fill="#bebebe"/>
        <path d="M810 604l46-19v75l-46 21z" fill="#bebebe"/>
        <!-- Red plate -->
        <path d="M427 487l190 135v69L427 556z" fill="#b05b5d"/>
        <path d="M617 622l239-106v69L617 691z" fill="#c26365"/>
        <!-- Blue plate -->
        <path d="M427 440l190 128v54L427 487z" fill="#5d83aa"/>
        <path d="M617 560l239-100v56L617 622z" fill="#6c96c6"/>
        <path d="M427 487l190 135 239-106" fill="none" stroke-width="2"/>
        <ellipse cx="736.500" cy="542" rx="6" ry="8" transform="rotate(25 736.500 542)" fill="#c4ecf6" stroke-width="1.800"/>
        <ellipse cx="736.500" cy="604.500" rx="6" ry="8" transform="rotate(25 736.500 604.500)" fill="#f6a8a4" stroke-width="1.800"/>
        <ellipse cx="508" cy="597" rx="4" ry="7" transform="rotate(-18 508 597)" fill="#6c6060" stroke-width="1.500"/>
        <ellipse cx="533.500" cy="615" rx="4" ry="7" transform="rotate(-18 533.500 615)" fill="#6c6060" stroke-width="1.500"/>
        <!-- Top plate -->
        <path d="M407.500 421L596 555.500V576L407.500 441z" fill="#ababab"/>
        <path d="M876 433L596 555.500V576L876 453z" fill="#bdbdbd"/>
        <path d="M687 297L407.500 421 596 555.500 876 433z" fill="#fff"/>
        <!-- Locating ring -->
        <path d="M590.500 418v8c0 16 23 29 51 29s51-13 51-29v-8z" fill="#00684e" stroke-width="1.800"/>
        <ellipse cx="641.500" cy="417.500" rx="51" ry="28.500" fill="#06c294" stroke-width="1.800"/>
        <ellipse cx="641.500" cy="417" rx="36" ry="20" fill="#04795a" stroke-width="2.200"/>
        <path d="M607 424c5-10 19-14 34-14s30 4 35 14c-6 9-20 13-35 13s-29-4-34-13z" fill="#fff"/>
        <path d="M624 435c4-6 29-8 37 0-10 3-27 3-37 0z" fill="#a0cc20"/>
        <path d="M673 404l7-4M605 434l6-3" stroke-width="7" stroke-linecap="round"/>
      </g>
      <!-- Screws -->
      <g fill="#00e818" stroke="#000">
        <g stroke-width="2.500"><ellipse cx="694" cy="352" rx="11" ry="6"/><ellipse cx="781.500" cy="414.500" rx="11" ry="6"/><ellipse cx="501.500" cy="437" rx="11" ry="6"/></g>
        <g fill="#0a6c14" stroke-width="2"><ellipse cx="694" cy="352" rx="6.500" ry="4"/><ellipse cx="781.500" cy="414.500" rx="6.500" ry="4"/><ellipse cx="501.500" cy="437" rx="6.500" ry="4"/></g>
      </g>
      <text x="598" y="535" font-size="14" fill="#d82840">X.</text>
      <!-- Highlighted cavity part -->
      <path d="M641 454L697 495 723 529 718 534 643 566 622 556 561 491 567 486z" fill="#ff9c42" stroke="#ff9c42" stroke-width="2" stroke-linejoin="round"/>
      <g fill="#fff">
        <path d="M581 490l12-8 14 11 3 9 13 1 17 15-12 7-18-13-20-10z"/>
        <path d="M600 480l20-9 10 8-7-1-15 8z"/>
        <path d="M626 470l11-6h6l5 8 22 16h3l12 12-17 7-1-7-24-17-3-7z"/>
        <path d="M627 502l18-9 20 13 11 1-23 10-10 3-5-9z"/>
        <path d="M650 523l26-10-3 14-21 7z"/>
        <path d="M617 491h3v2h-3zM625 489h3v2h-3zM622 496h4v2h-4zM690 504h2v8h-2zM688 517h4v2h-4zM640 530h4v2h-4z"/>
      </g>
      <path d="M638 552l4-1v-3l11 0 57-27-2 4-58 26zM697 510l10 10-9 2zM653 529l22-9v7l-22 9z" fill="#bdbdbd"/>
      <path d="M646 553l64-27" stroke="#000" stroke-width="1.500"/>
      <path d="M688 514h2v2h-2zM646 532h2v2h-2z"/>
      <path d="M583 495c7-5 17-1 17 6l-6-1c-3-3-6-4-11-5z" fill="#00b818" stroke="#000" stroke-width="1.500"/>
      <!-- Work coordinate axes -->
      <path d="M639 463h5l-2 35z" fill="#4858b8"/><path d="M611 516l2-4 26-8z" fill="#e09898"/><path d="M644 504l31 22-6 1z" fill="#90d0a0"/>
      <text x="656" y="539" font-size="14" fill="#209838">YC</text>
      <text x="622" y="455" font-size="14" fill="#1450e8">ZC</text>
      <!-- View triad -->
      <path d="M402 728v-7" stroke="#2050e8" stroke-width="2"/><path d="M399 724l3-6 3 6z" fill="#2050e8"/>
      <path d="M388 749l-8 3" stroke="#d02020" stroke-width="3"/><path d="M415 751l9 5" stroke="#20a030" stroke-width="3"/>
      <path d="M402 727l12 7v16l-12 8-15-8v-16z" fill="#b2b6b6"/>
      <path d="M387 734l15 7 12-7M402 741v17" fill="none" stroke="#d4d8d8"/><circle cx="402" cy="742" r="3" fill="#eee"/>
      <path d="M402 728v12" stroke="#a4b0f0"/><path d="M388 749l11-4" stroke="#f0b0a8"/>
      <text x="398" y="719" font-size="12" fill="#2060f8">Z</text><text x="370" y="761" font-size="12" fill="#e02020">X</text><text x="420" y="764" font-size="12" fill="#20b030">Y</text>
    </svg>
  </section>
</main>

<!-- Sketch toolbar -->
<div class="flex h-[34px] shrink-0 overflow-hidden border-t-2 border-white bg-linear-to-b from-[#e0e1e2] to-[#cdd0ce] pl-[149px] text-[#8a8c8c] *:shrink-0">
  <i class="my-1 mx-[2px] w-[2px] border-l-2 border-dotted border-[#98999b]"></i>
  <button aria-label="草图" class="grid w-[31px] place-items-center"><svg class="size-6" viewBox="0 0 24 24"><path d="M2 3l16 3v17L2 19z" fill="#fafcf4" stroke="#222" stroke-width="1.300"/><path d="M4 6l6 1v4l-6-1zM4 12l4 1v5l-4-1zM10 14l6 1v4l-6-1z" fill="none" stroke="#222"/><path d="M17 1v12M11 7h12M13 3l8 8M21 3l-8 8" stroke="#f0d000" stroke-width="1.300"/></svg></button>
  <button class="flex w-[83px] items-center gap-[3px] pl-[5px] whitespace-nowrap"><svg class="size-6" viewBox="0 0 24 24"><path d="M0 0h24v24H0z" fill="#7c8488"/><path d="M4 8l16-4 2 10-16 3zM6 22L4 8" fill="#6a6c6e" stroke="#555"/><path d="M8 8h4v4H8zM16 6h4v4h-4zM12 12h4v3h-4z" fill="#909294"/></svg>完成草图</button>
  <button aria-label="轮廓" class="grid w-[31px] place-items-center"><svg class="size-6" viewBox="0 0 24 24"><path d="M3 2v13c0 8 9 8 9 0s9-8 9 0v5" fill="none" stroke="#222" stroke-width="1.300"/><g fill="#e01010"><circle cx="3" cy="13" r="2"/><circle cx="12" cy="13" r="2"/><circle cx="21" cy="13" r="2"/></g></svg></button>
  <button aria-label="直线" class="grid w-[31px] place-items-center"><svg class="size-6" viewBox="0 0 24 24"><path d="M4 20L20 4" stroke="#222" stroke-width="1.300"/><circle cx="4" cy="20" r="2" fill="#e01010"/><circle cx="20" cy="4" r="2" fill="#e01010"/></svg></button>
  <button aria-label="圆弧" class="grid w-[31px] place-items-center"><svg class="size-6" viewBox="0 0 24 24"><path d="M3 4c9 0 17 7 18 16" fill="none" stroke="#222" stroke-width="1.300"/><g fill="#e01010"><circle cx="3" cy="4" r="2"/><circle cx="16" cy="8" r="2"/><circle cx="21" cy="20" r="2"/></g></svg></button>
  <button aria-label="圆" class="grid w-[31px] place-items-center"><svg class="size-6" viewBox="0 0 24 24"><circle cx="12" cy="12" r="10" fill="none" stroke="#222" stroke-width="1.300"/></svg></button>
  <button aria-label="圆角" class="grid w-[31px] place-items-center"><svg class="size-6" viewBox="0 0 24 24" fill="none" stroke="#8a8486"><path d="M2 2h20v21"/><path d="M8 2c8 0 13 6 14 12" stroke="#b07878"/></svg></button>
  <button aria-label="倒斜角" class="grid w-[31px] place-items-center"><svg class="size-6" viewBox="0 0 24 24" fill="none" stroke="#8a8486"><path d="M2 2h20v21"/><path d="M10 2l12 12" stroke="#b07878"/></svg></button>
  <button aria-label="矩形" class="grid w-[31px] place-items-center"><svg class="size-6" viewBox="0 0 24 24"><path d="M3 5h19v14H3z" fill="none" stroke="#222" stroke-width="1.400"/><circle cx="3" cy="5" r="2" fill="#e01010"/><circle cx="22" cy="19" r="2" fill="#e01010"/></svg></button>
  <button aria-label="艺术样条" class="grid w-[31px] place-items-center"><svg class="size-6" viewBox="0 0 24 24"><path d="M2 13L6 3M6 9c4 0 6 7 11 5l5-5M16 14v7M4 9l13 5" fill="none" stroke="#666" stroke-width="1.400"/><g fill="#888"><circle cx="2" cy="13" r="2"/><circle cx="6" cy="3" r="2"/><circle cx="22" cy="9" r="2"/><circle cx="16" cy="21" r="2"/></g><circle cx="8" cy="10" r="2.200" fill="#e01010"/><circle cx="16" cy="14" r="2.200" fill="#e01010"/></svg></button>
  <button aria-label="点" class="grid w-[31px] place-items-center"><svg class="size-6" viewBox="0 0 24 24"><path d="M12 3v18M3 12h18" stroke="#222" stroke-width="1.400"/></svg></button>
  <button aria-label="偏置曲线" class="grid w-[31px] place-items-center"><svg class="size-6" viewBox="0 0 24 24" fill="none" stroke="#888a8c"><path d="M2 22V9l6-7h7c2 0 3 2 2 5 5 0 7 4 6 8-1 4-4 7-8 7z"/><path d="M5 19v-9l4-5h5v5c4 0 6 2 6 4 0 3-2 5-5 5z"/></svg></button>
  <button aria-label="更多" class="grid w-3 place-items-center text-black"><svg class="h-[3px] w-[5px]"><use href="#dn"/></svg></button>
  <i class="my-px ml-[3px] w-[3px] border-l border-white"></i>
  <button aria-label="快速修剪" class="grid w-[31px] place-items-center"><svg class="size-6" viewBox="0 0 24 24"><path d="M3 2l12 21M1 17h14" stroke="#85888a" stroke-width="1.400"/><path d="M13 13l5-7 5 2-4 7z" fill="#8c7f7c"/></svg></button>
  <button aria-label="快速延伸" class="grid w-[31px] place-items-center"><svg class="size-6" viewBox="0 0 24 24"><path d="M1 17h8M3 4l12 17M9 15L22 3" stroke="#85888a" stroke-width="1.400"/><path d="M13 11l6-8 4 1-6 9z" fill="#8c8078"/></svg></button>
  <i class="my-px ml-[3px] w-[3px] border-l border-white"></i>
  <button aria-label="自动判断尺寸" class="grid w-[31px] place-items-center"><svg class="size-6" viewBox="0 0 24 24"><path d="M1 8v12M22 8v12M3 14h18M7 21L19 3" stroke="#808486" stroke-width="1.300"/><path d="M2 14l4-3v6zM21 14l-4-3v6z" fill="#808486"/><path d="M14 2l5-1-2 5h3l-8 7 2-5h-3z" fill="#8c9080"/></svg></button>
  <button aria-label="更多" class="grid w-3 place-items-center text-black"><svg class="h-[3px] w-[5px]"><use href="#dn"/></svg></button>
  <i class="my-px ml-[3px] w-[3px] border-l border-white"></i>
  <button aria-label="几何约束" class="grid w-[31px] place-items-center"><svg class="size-6" viewBox="0 0 24 24"><path d="M1 12L10 3M6 13L14 5M11 20h12M17 11v9" stroke="#8a888c" stroke-width="1.400"/></svg></button>
  <button aria-label="显示约束" class="grid w-[31px] place-items-center"><svg class="size-6" viewBox="0 0 24 24"><path d="M1 7l6 5-6 5z" fill="#68946c"/><path d="M9 11L19 2M14 12l9-9M11 23h12M17 14v9" stroke="#8a888c" stroke-width="1.400"/></svg></button>
  <button aria-label="更多" class="grid w-3 place-items-center text-black"><svg class="h-[3px] w-[5px]"><use href="#dn"/></svg></button>
  <button aria-label="选项" class="grid w-3 place-items-center pt-4 text-black"><svg class="h-[3px] w-[5px]"><use href="#dn"/></svg></button>
  <i class="w-px bg-[#bcbec0]"></i>
</div>
<div class="h-1 shrink-0 border-t border-[#55575a] bg-[#111]"></div>

<script>
  const tree = document.getElementById('tree');
  const folders = [
    ['+', '图纸', '<svg class="size-[15px]" viewBox="0 0 15 15"><circle cx="7.5" cy="7.5" r="6.500" fill="#dce8f4" stroke="#4c5860" stroke-width="1.500"/><path d="M7.5 3v5h4" fill="none" stroke="#111"/></svg><svg class="ml-px h-[15px] w-4" viewBox="0 0 16 15"><path d="M3 1h12v10H3z" fill="#fff" stroke="#3c4c90"/><path d="M1 4h12v10H1z" fill="#f4f6ff" stroke="#3c4c90"/><path d="M1 5h12M8 11h5" stroke="#3c4c90"/></svg>'],
    ['+', '用户表达式', '<svg class="h-[15px] w-4" viewBox="0 0 16 15"><svg y="1" width="16" height="14"><use href="#folder"/></svg><path d="M9 1h7M9 3.500h7" stroke="#22285c"/></svg>'],
    ['+', '组', '<svg class="h-[14px] w-4"><use href="#folder"/></svg>'],
    ['−', '模型历史记录', '<svg class="h-[14px] w-4"><use href="#folder"/></svg>'],
  ];
  let html = folders.map(([sign, label, icon], i) => `
    <tr class="h-5 border-b border-[#dcdcde] ${i % 2 ? 'bg-white' : 'bg-[#f6f6f7]'}">
      <td class="border-r border-[#dcdcde] p-0"><div class="flex h-[19px] items-center pl-[5px]">
        <button aria-label="展开或折叠 ${label}" class="grid size-[9px] place-items-center border border-[#8f9192] bg-white text-[9px] leading-none">${sign}</button>
        <i class="mr-px w-[5px] border-t border-dotted border-[#8f9192]"></i>${icon}<span class="pl-[2px] whitespace-nowrap">${label}</span></div></td>
      <td class="p-0"></td>
    </tr>`).join('');
  for (let n = 0; n <= 13; n++) {
    const on = n === 0;
    html += `
    <tr class="h-5 border-b border-[#dcdcde] ${n % 2 ? 'bg-white' : 'bg-[#f6f6f7]'}">
      <td class="border-r border-[#dcdcde] p-0"><label class="flex h-[19px] items-center pl-[29px]">
        <i class="h-5 border-l border-dotted border-[#8f9192]"></i><i class="mr-[2px] w-[9px] border-t border-dotted border-[#8f9192]"></i>
        <span class="mr-[2px] grid size-3"><input type="checkbox" checked class="peer col-start-1 row-start-1 size-3 appearance-none border border-black bg-white"><svg class="pointer-events-none col-start-1 row-start-1 hidden size-3 peer-checked:block"><use href="#check"/></svg></span>
        <svg class="size-4"><use href="#body"/></svg>
        <span class="h-full flex-1 pl-[2px] leading-[19px] ${on ? 'bg-[#3594f8] text-white' : ''}">体 (${n})</span></label></td>
      <td class="p-0 ${on ? 'bg-[#3594f8]' : ''}"></td>
    </tr>`;
  }
  tree.innerHTML = html;
</script>
</body>
</html>
